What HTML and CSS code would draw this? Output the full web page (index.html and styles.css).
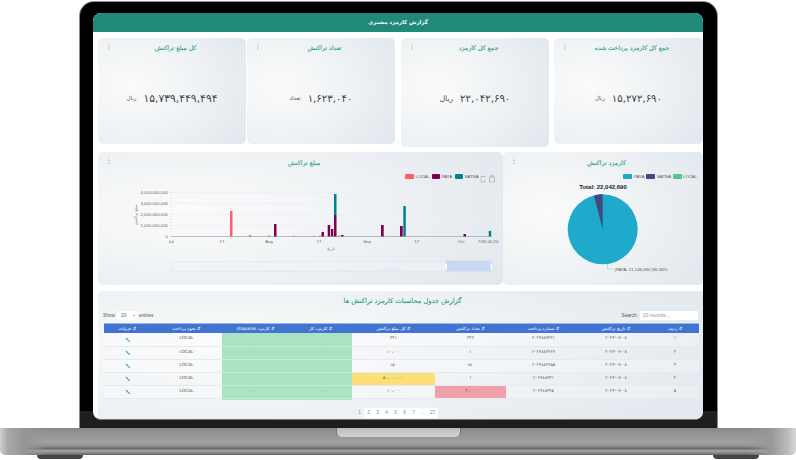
FILE: index.html
```html
<!DOCTYPE html>
<html lang="fa">
<head>
<meta charset="utf-8">
<title>گزارش کارمزد مشتری</title>
<link rel="stylesheet" href="styles.css">
</head>
<body>
<div class="laptop">
  <div class="lid">
    <div class="screen" dir="rtl">
      <header class="topbar">گزارش کارمزد مشتری</header>
      <section class="stats">
        <article class="card stat stat-d">
          <span class="kebab">⋮</span>
          <h2 class="card-title">جمع کل کارمزد پرداخت شده</h2>
          <div class="stat-body"><span class="num">۱۵,۲۷۲,۶۹۰</span><span class="unit">ریال</span></div>
        </article>
        <article class="card stat stat-c">
          <span class="kebab">⋮</span>
          <h2 class="card-title">جمع کل کارمزد</h2>
          <div class="stat-body"><span class="num">۲۲,۰۴۲,۶۹۰</span><span class="unit unit-lg">ریال</span></div>
        </article>
        <article class="card stat stat-b">
          <span class="kebab">⋮</span>
          <h2 class="card-title">تعداد تراکنش</h2>
          <div class="stat-body"><span class="num">۱,۶۲۳,۰۴۰</span><span class="unit">تعداد</span></div>
        </article>
        <article class="card stat stat-a">
          <span class="kebab">⋮</span>
          <h2 class="card-title">کل مبلغ تراکنش</h2>
          <div class="stat-body"><span class="num num-lg">۱۵,۷۳۹,۴۴۹,۴۹۴</span><span class="unit">ریال</span></div>
        </article>
      </section>

      <section class="charts">
        <article class="card pie-card">
          <span class="kebab">⋮</span>
          <h2 class="card-title">کارمزد تراکنش</h2>
          <svg class="plot" viewBox="503 171 200 110" width="200" height="110">
            <g class="legend-text">
              <rect x="623" y="174" width="9" height="5" rx="1" fill="#1fa9ca"/><text x="634" y="178.2">PAYA</text>
              <rect x="646" y="174" width="9" height="5" rx="1" fill="#3f4a80"/><text x="657" y="178.2">SATNA</text>
              <rect x="673" y="174" width="9" height="5" rx="1" fill="#55c68b"/><text x="683" y="178.2">LOCAL</text>
            </g>
            <text class="pie-total" x="603" y="188.5" text-anchor="middle">Total: 22,042,690</text>
            <circle cx="602.7" cy="229.3" r="35" fill="#1fa9ca"/>
            <path d="M602.7 229.3 L602.7 194.3 A35 35 0 0 0 594 195.4 Z" fill="#3f4a80"/>
            <polyline points="607.5,264 607.5,269 613,269" fill="none" stroke="#7fcbdc" stroke-width=".6"/>
            <text class="pie-label" x="614.5" y="270.6">(PAYA: 21,146,690 )95.94%</text>
          </svg>
        </article>
        <article class="card bar-card">
          <span class="kebab">⋮</span>
          <h2 class="card-title">مبلغ تراکنش</h2>
          <svg class="plot" viewBox="98 171 405 110" width="405" height="110">
            <g class="legend-text">
              <rect x="405" y="174" width="9" height="5" rx="1" fill="#ff5f67"/><text x="415.5" y="178.2">LOCAL</text>
              <rect x="432" y="174" width="8" height="5" rx="1" fill="#7d0052"/><text x="441.5" y="178.2">PAYA</text>
              <rect x="455" y="174" width="8" height="5" rx="1" fill="#00808a"/><text x="464.5" y="178.2">SATNA</text>
            </g>
            <g fill="none" stroke="#8d949b" stroke-width=".5">
              <path d="M481 176.500h4v1m0 2v2.500h-4v-5.500l1.500-1"/>
              <path d="M489.500 177h5v5h-5zM491 177v-1.500h2v1.500"/>
            </g>
            <g stroke="#e4e9f0" stroke-width=".5">
              <path d="M171 192.300H492M171 203.300H492M171 214.300H492M171 225.300H492"/>
            </g>
            <g stroke="#edf0f4" stroke-width=".4">
              <path d="M320 197.800H492M320 208.800H492M320 219.800H492M320 230.800H492"/>
            </g>
            <path d="M171 236.500H492" stroke="#a9adb4" stroke-width=".8"/>
            <path d="M171 192V236" stroke="#b9bdc4" stroke-width=".5" stroke-dasharray="1 2"/>
            <g class="axis-text" text-anchor="end">
              <text x="168" y="193.800">4,000,000,000</text>
              <text x="168" y="204.800">3,000,000,000</text>
              <text x="168" y="215.800">2,000,000,000</text>
              <text x="168" y="226.800">1,000,000,000</text>
              <text x="168" y="237.800">0</text>
            </g>
            <g class="axis-text" text-anchor="middle">
              <text x="171" y="242.500">Jul</text>
              <text x="222" y="242.500">17</text>
              <text x="269" y="242.500">Aug</text>
              <text x="319" y="242.500">17</text>
              <text x="367" y="242.500">Sep</text>
              <text x="417" y="242.500">17</text>
              <text x="461" y="242.500">Oct</text>
              <text x="488" y="242.500">7/30 06:20</text>
            </g>
            <text class="axis-name" x="331" y="250" text-anchor="middle">تاریخ</text>
            <text class="axis-name" transform="rotate(-90 137 215)" x="137" y="215" text-anchor="middle">مبلغ تراکنش</text>
            <g fill="#ff5f67">
              <rect x="230" y="211" width="2.500" height="25.500"/>
              <rect x="249" y="235" width="2" height="1.500"/>
              <rect x="268" y="235.500" width="2" height="1"/>
              <rect x="293" y="235.800" width="2" height=".7"/>
              <rect x="313" y="235.800" width="2" height=".7"/>
              <rect x="319" y="235.600" width="2" height=".9"/>
              <rect x="338" y="235.500" width="2" height="1"/>
            </g>
            <g fill="#7d0052">
              <rect x="274" y="224" width="2.500" height="12.500"/>
              <rect x="321.500" y="232" width="2.500" height="4.500"/>
              <rect x="327.700" y="225" width="2.500" height="11.500"/>
              <rect x="331" y="229" width="2.300" height="7.500"/>
              <rect x="334" y="215" width="2.500" height="21.500"/>
              <rect x="341" y="235" width="2.500" height="1.500"/>
              <rect x="381" y="225" width="2.700" height="11.500"/>
              <rect x="400" y="226" width="2.700" height="10.500"/>
              <rect x="463.500" y="234" width="2.500" height="2.500"/>
            </g>
            <g fill="#00808a">
              <rect x="334" y="194" width="2.500" height="21"/>
              <rect x="403.300" y="206" width="2.500" height="30.500"/>
              <rect x="488.700" y="231" width="2.500" height="5.500"/>
            </g>
            <rect x="172" y="262" width="320" height="9.500" fill="#f1f4f8" fill-opacity=".5" stroke="#dfe5ee" stroke-width=".6"/>
            <path d="M173 271H200V270.500H230V271H260L268 270H292V270.500H330L340 269.500L360 270.500L380 270L397 266L402 270.500H446V271H173Z" fill="#e6ebf3"/>
            <rect x="446" y="260.500" width="45.500" height="11" fill="#c9d8f2"/>
            <rect x="445.500" y="264" width="1.500" height="5.500" rx=".5" fill="#fff"/>
            <rect x="490.500" y="264" width="1.500" height="5.500" rx=".5" fill="#fff"/>
          </svg>
        </article>
      </section>

      <section class="card table-card">
        <h2 class="table-title">گزارش جدول محاسبات کارمزد تراکنش ها</h2>
        <div class="controls" dir="ltr">
          <div class="length"><span>Show</span><span class="fake-select">20<i class="caret"></i></span><span>entries</span></div>
          <div class="search"><span>Search:</span><span class="fake-input">20 records...</span></div>
        </div>
        <div class="table-wrap">
          <table class="report">
            <thead>
              <tr>
                <th class="c-idx">⇵ ردیف</th><th class="c-date">⇵ تاریخ تراکنش</th><th class="c-pay">⇵ شماره پرداخت</th><th class="c-cnt">⇵ تعداد تراکنش</th><th class="c-sum">⇵ کل مبلغ تراکنش</th><th class="c-fee">⇵ کارمزد کل</th><th class="c-fee2">⇵ کارمزد shaparak</th><th class="c-way">⇵ نحوه پرداخت</th><th class="c-det">⇵ جزئیات</th>
              </tr>
            </thead>
            <tbody>
              <tr><td>۱</td><td>۲۰۲۳-۰۷-۰۸</td><td>۲۰۲۴۸۸۹۳۲۱</td><td>۳۴۲</td><td>۳۴۱</td><td class="ok">۰</td><td class="ok">۰</td><td>LOCAL</td><td><svg class="edit" viewBox="0 0 10 10"><path d="M1 2.500 2.500 1 9 7.500V9H7.500Z"/></svg></td></tr>
              <tr><td>۲</td><td>۲۰۲۳-۰۷-۰۸</td><td>۲۰۲۴۸۸۲۴۲۷</td><td>۱</td><td>۱۰،۰۰۰</td><td class="ok">۰</td><td class="ok">۰</td><td>LOCAL</td><td><svg class="edit" viewBox="0 0 10 10"><path d="M1 2.500 2.500 1 9 7.500V9H7.500Z"/></svg></td></tr>
              <tr><td>۳</td><td>۲۰۲۳-۰۷-۰۸</td><td>۲۰۲۴۸۸۲۴۵۵</td><td>۱۵۰</td><td>۱۵۰</td><td class="ok">۰</td><td class="ok">۰</td><td>LOCAL</td><td><svg class="edit" viewBox="0 0 10 10"><path d="M1 2.500 2.500 1 9 7.500V9H7.500Z"/></svg></td></tr>
              <tr><td>۴</td><td>۲۰۲۳-۰۷-۰۸</td><td>۲۰۲۴۸۸۳۳۱</td><td>۱</td><td class="warn">۵۰،۰۰۰،۰۰۰</td><td class="ok">۰</td><td class="ok">۰</td><td>LOCAL</td><td><svg class="edit" viewBox="0 0 10 10"><path d="M1 2.500 2.500 1 9 7.500V9H7.500Z"/></svg></td></tr>
              <tr><td>۵</td><td>۲۰۲۳-۰۷-۰۸</td><td>۲۰۲۴۸۸۳۴۵</td><td class="bad">۳،۰۰۰</td><td>۱۰،۰۰۰</td><td class="ok">۰</td><td class="ok">۰</td><td>LOCAL</td><td><svg class="edit" viewBox="0 0 10 10"><path d="M1 2.500 2.500 1 9 7.500V9H7.500Z"/></svg></td></tr>
              <tr><td>۶</td><td>۲۰۲۳-۰۷-۰۸</td><td>۲۰۲۴۸۸۳۵۲</td><td>۱</td><td>۱۰،۰۰۰</td><td class="ok">۰</td><td class="ok">۰</td><td>LOCAL</td><td></td></tr>
            </tbody>
          </table>
        </div>
        <nav class="pager" dir="ltr">
          <a class="page current">1</a><a class="page">2</a><a class="page">3</a><a class="page">4</a><a class="page">5</a><a class="page">6</a><a class="page">7</a><a class="page">…</a><a class="page wide">27</a>
        </nav>
      </section>
    </div>
  </div>
  <div class="base">
    <div class="notch"></div>
    <div class="feet"><span class="foot"></span><span class="foot"></span></div>
  </div>
</div>
</body>
</html>
```
FILE: styles.css
```css
* { box-sizing: border-box; }
html, body { margin: 0; padding: 0; background: #fff; }
body { font-family: "DejaVu Sans", "Liberation Sans", sans-serif; overflow: hidden; }

.laptop { width: 796px; height: 460px; padding: 1px 0 5px; overflow: hidden; display: flex; flex-direction: column; }

.lid {
  width: 639px; height: 427px; margin-left: 79px; flex: none;
  padding: 11px 14px 8px 13px;
  border: 1px solid #8c8c8c; border-bottom: 0;
  border-radius: 15px 15px 0 0;
  background: linear-gradient(#000 0, #000 96%, #1e1e1e 96%);
}

.screen {
  height: 407px; background: #fff; border-radius: 8px; overflow: hidden;
  border-bottom: 1px solid #777;
  display: flex; flex-direction: column;
}
.topbar {
  height: 19px; flex: none; background: #1f8a78; color: #fff;
  font-size: 5.400px; font-weight: 700; line-height: 19px; text-align: center;
}

.card {
  position: relative; border-radius: 5px;
  background: radial-gradient(ellipse 95% 95% at 22% 45%, #fafbfb 0%, #f0f3f5 45%, #e1e7ee 100%);
}
.kebab { position: absolute; left: 7px; top: 4px; font-size: 7.500px; line-height: 10px; color: #777; }
.card-title {
  margin: 0; font-size: 6.200px; font-weight: 400; color: #1f9a82;
  text-align: center; line-height: 10px; padding: 5px 0 0 7px; -webkit-text-stroke: .1px #1f9a82;
}

.stats { display: flex; align-items: flex-start; padding: 6px 0 0 5px; height: 120px; flex: none; }
.stat { width: 148px; height: 106px; display: flex; flex-direction: column; }
.stat-d { width: 149px; margin-left: 5px; }
.stat-c { height: 109px; margin-left: 6px; }
.stat-b { margin-left: 1px; }
.stat-body { display: flex; align-items: center; justify-content: center; gap: 7px; margin-top: 37px; height: 16px; }
.num { font-size: 10.200px; color: #444; direction: ltr; }
.num-lg { font-size: 10.800px; }
.unit { font-size: 5.500px; color: #555; }
.unit-lg { font-size: 7.500px; }

.charts { display: flex; height: 133px; flex: none; padding-left: 5px; }
.pie-card { width: 200px; }
.bar-card { width: 405px; }
.charts .card-title { padding-top: 6px; }
.plot { display: block; margin-top: 3px; direction: ltr; }
.legend-text text { font: 4.300px "Liberation Sans", sans-serif; fill: #555; }
.pie-total { font: 700 6px "Liberation Sans", sans-serif; fill: #222; }
.pie-label { font: 4.300px "Liberation Sans", sans-serif; fill: #555; }
.axis-text text { font: 4.300px "Liberation Sans", sans-serif; fill: #666; }
.axis-name { font-size: 4px; fill: #777; }

.table-card { margin: 6px 0 0 5px; height: 129px; padding: 0 4px 0 5px; border-radius: 5px 0 0 5px; flex: none; }
.table-title { margin: 0; height: 20px; padding: 5px 0 0 3px; font-size: 6.700px; line-height: 10px; font-weight: 400; color: #1f9a82; text-align: center; -webkit-text-stroke: .1px #1f9a82; }
.controls { display: flex; justify-content: space-between; align-items: center; height: 9px; font: 4.800px "Liberation Sans", sans-serif; color: #555; }
.length, .search { display: flex; align-items: center; gap: 2px; }
.fake-select { position: relative; display: block; width: 20px; height: 9px; line-height: 9px; padding-left: 4px; background: #fff; border-radius: 1px; color: #666; }
.caret { position: absolute; right: 2px; top: 4px; border: 1.500px solid transparent; border-top-color: #555; border-bottom: 0; }
.fake-input { display: block; width: 58px; height: 9px; line-height: 9px; padding-left: 3px; background: #fff; color: #999; margin-right: 1px; }

.table-wrap { margin-top: 3px; height: 77px; overflow: hidden; }
.report { width: 595px; border-collapse: collapse; table-layout: fixed; font-size: 4.300px; color: #555; }
.report th { height: 9.500px; background: #4173d1; color: #fff; font-weight: 400; padding: 0; border-top: .5px solid #9db5e6; text-align: center; }
.report td { height: 13px; padding: 0 0 3px; text-align: center; border-bottom: .5px solid #e6eaee; }
.report tbody tr:nth-child(odd) { background: rgba(255, 255, 255, .25); }
.c-idx { width: 48px; } .c-date { width: 70px; } .c-pay { width: 75px; } .c-cnt { width: 71px; } .c-sum { width: 83px; }
.c-fee { width: 63px; } .c-fee2 { width: 67px; } .c-way { width: 71px; } .c-det { width: 47px; }
.report td.ok { background: #abe2c0; border-bottom-color: #c5ecd4; }
.report td.warn { background: #fbe07a; }
.report td.bad { background: #f0a0a8; }
.edit { display: block; width: 5.500px; height: 5.500px; margin: 3px auto 0; fill: #4fa3bf; }

.pager { display: flex; justify-content: center; margin-top: 8px; padding-right: 9px; font: 4.500px "Liberation Sans", sans-serif; }
.page { width: 9px; height: 9.500px; line-height: 9.500px; text-align: center; background: #fff; color: #4b9db5; }
.current { background: #eef0f2; color: #888; }
.wide { width: 11px; }

.base {
  position: relative; height: 27px; flex: none;
  background:
    linear-gradient(90deg, #d0d0d0 0, #a8a8a8 1%, #969696 3%, rgba(150,150,150,0) 6%, rgba(150,150,150,0) 94%, #999 97%, #bcbcbc 99%, #d8d8d8 100%),
    linear-gradient(#868686 0, #949494 20%, #a0a0a0 55%, #8c8c8c 68%, #6a6a6a 76%, #a4a4a4 84%, #8a8a8a 92%, #5e5e5e 100%);
  border-radius: 0 0 5px 5px;
}
.notch {
  width: 125px; height: 9px; margin: 0 auto;
  background: linear-gradient(#bdbdbd, #d2d2d2); border-radius: 0 0 5px 5px;
  border-left: 1px solid #777; border-right: 1px solid #777;
}
.feet { position: absolute; top: 27px; left: 37px; right: 37px; display: flex; justify-content: space-between; }
.foot { width: 46px; height: 4px; background: #444; border-radius: 0 0 6px 6px; }
```
